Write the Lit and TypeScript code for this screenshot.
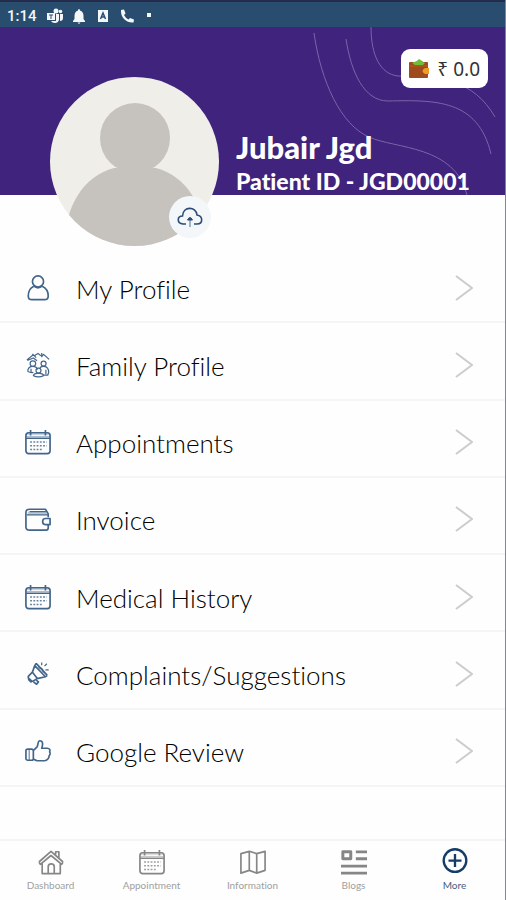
import { LitElement, html, css, svg, TemplateResult } from "lit";
import { customElement } from "lit/decorators.js";
import { classMap } from "lit/directives/class-map.js";

const calendar = svg`
  <rect x="1" y="4" width="26" height="22.500" rx="3"/>
  <path d="M1 10H27M6 1V7M22 1V7" />
  <path d="M1.500 5.500H26.500M1.500 8H26.500" stroke-width="1" opacity=".5"/>
  <path d="M5.500 14H23.500M5.500 18H23.500M5.500 22H19" stroke-dasharray="2 1.500" stroke-width="1.600" opacity=".8"/>`;

const icons: Record<string, TemplateResult> = {
  person: svg`
    <circle cx="14" cy="7" r="6"/>
    <path d="M9.500 12C5 14 3.500 18.500 3.500 22.500C3.500 25 5 26.500 7.500 26.500H21C23.500 26.500 25 25 25 22.500C25 18.500 23 14 18.500 12"/>
    <path d="M9.500 12Q14 15.500 18.500 12"/>`,
  family: svg`
    <g stroke-width="1.300">
      <path d="M2 8.500L9 3M2.500 9L9 6.500L13 9.500M10 4L14 1.500L17 4M18 1V5L20 2.500L26 8M8 2L12 6"/>
      <circle cx="8.500" cy="12.500" r="3"/><circle cx="20" cy="12.500" r="2.700"/>
      <path d="M3 21C3 16.500 5 15.500 8.500 15.500S13 17 13.500 19M3 21Q6 22.500 9 22"/>
      <path d="M16 17.500Q17 15 20.500 15.500Q25.500 16 25.500 22L24.500 25H19.500"/>
      <circle cx="14.500" cy="20" r="2.700"/>
      <path d="M9 25.500Q9.500 22.500 14.500 23Q19.500 22.500 20 25.500Q14.500 28 9 25.500Z"/>
      <path d="M22.500 19V24M6.500 18V22"/>
    </g>`,
  calendar,
  wallet: svg`
    <path d="M25 12V8.500L22 3.500H5C2.500 3.500 1 4.500 1 7V22.500C1 24.500 2.500 26 5 26H23C24.500 26 25 25 25 23.500V20"/>
    <path d="M2 9.500H25M5 6H22.500" stroke-width="1.200"/>
    <path d="M3 7.500H23.500" opacity=".35" stroke-width="3"/>
    <path d="M27 13.500H22C18 13.500 18 20 22 20H27Z"/>`,
  megaphone: svg`
    <path d="M12 2.500L24 15.500M10.500 5L22 17M12 2.500L10.500 5L8 12L4 16C2.500 18 5.500 23 9 21.500L13 19L22 17L24 15.500"/>
    <path d="M8 12L13.500 19M4.500 19L8 22.500M3.500 19.500L7 23M12 20.500L14.500 22.500L12.500 25L9 22.500"/>
    <path d="M14.500 7.500Q20 7 19.500 12.500M18 1.500V4.500M21 5.500L23.500 3M22 9.500H25.500" stroke-width="1.300"/>`,
  thumb: svg`
    <path d="M9.500 13L13 9.500C14.500 7 13.500 3 16 3C19.500 3 19.500 7 18 11H24C26.500 11 27.500 13 26.500 15C27.500 16 27 18.500 26 19C26 21.500 24 24.500 21 24.500H13L9.500 23"/>
    <rect x="1" y="12" width="8" height="12" rx="2"/><path d="M4.500 12V24" stroke-width="1"/>`,
  home: svg`
    <path d="M1 14L14 2.500L27 14M1 14L2.500 16.500L14 7L25.500 16.500L27 14M4.500 15.500V26.500H24V15.500M19 6V3H22.500V10M11 26.500V19C11 15 17.500 15 17.500 19V26.500"/>`,
  map: svg`
    <path d="M1 5L10 2.500L18 5L27 2.500V23L18 26L10 23L1 26ZM10 2.500V23M18 5V26"/>`,
  blogs: svg`
    <path d="M2 3H10.500V10.500H2Z" stroke-width="3.200"/>
    <path d="M16 3H28M16 10.500H28M0 18.500H28M0 26H28" stroke-width="3"/>`,
  more: svg`<circle cx="14" cy="12.500" r="12.200" stroke-width="2.500"/><path d="M14 5.500V19.500M7 12.500H21" stroke-width="2.500"/>`,
};

const icon = (name: string) => html`<svg class="icon" viewBox="0 0 28 28" aria-hidden="true">${icons[name]}</svg>`;

const menu = [
  ["person", "My Profile"],
  ["family", "Family Profile"],
  ["calendar", "Appointments"],
  ["wallet", "Invoice"],
  ["calendar", "Medical History"],
  ["megaphone", "Complaints/Suggestions"],
  ["thumb", "Google Review"],
];

const tabs = [
  ["home", "Dashboard"],
  ["calendar", "Appointment"],
  ["map", "Information"],
  ["blogs", "Blogs"],
  ["more", "More"],
];

@customElement("app-root")
export class AppRoot extends LitElement {
  static styles = css`
    :host {
      display: flex;
      flex-direction: column;
      box-sizing: border-box;
      min-height: 100vh;
      background: #fefefe;
      border-right: 1px solid #85858f;
      font-family: Lato, "Noto Sans", sans-serif;
      font-variant-ligatures: none;
      color: #1c1c1c;
    }
    * { box-sizing: border-box; }
    a { color: inherit; text-decoration: none; }
    .status {
      display: flex;
      align-items: center;
      gap: 8px;
      height: 27px;
      padding: 2px 7px 0;
      border-top: 2px solid #252b4b;
      background: #294d6f;
      color: #f4f7fa;
      font: 500 15px/24px Roboto, sans-serif;
    }
    .time { padding-right: 2px; }
    .glyph { width: 16px; height: 16px; fill: #f4f7fa; overflow: visible; }
    .hero {
      position: relative;
      display: grid;
      grid-template-columns: 169px 1fr;
      grid-template-rows: auto 1fr;
      column-gap: 17px;
      padding: 22px 17px 0 50px;
      background: #3f237d;
      color: #fff;
    }
    .waves {
      position: absolute;
      top: 0;
      right: 0;
      width: 200px;
      height: 168px;
      fill: none;
      stroke: #7b64a8;
      stroke-width: 1;
    }
    .avatar {
      position: relative;
      grid-row: 1 / 3;
      height: 169px;
      margin: 28px 0 -51px;
    }
    .portrait { display: block; width: 100%; height: 100%; }
    .upload {
      position: absolute;
      right: 8px;
      bottom: 8px;
      display: grid;
      place-items: center;
      width: 42px;
      height: 42px;
      padding: 0;
      border: 0;
      border-radius: 50%;
      background: #f4f7fa;
    }
    .cloud { width: 28px; height: 28px; fill: none; stroke: #2c4c75; stroke-width: 1.600; }
    .balance {
      position: relative;
      justify-self: end;
      display: flex;
      align-items: center;
      gap: 8px;
      height: 39px;
      padding: 0 8px;
      border: 0;
      border-radius: 9px;
      background: #fff;
      color: #333;
      font: 400 19px/24px "Noto Sans", sans-serif;
    }
    .purse { width: 20px; height: 20px; }
    .who { position: relative; align-self: end; }
    .name { margin: 0; font-size: 31px; line-height: 40px; font-weight: 900; }
    .pid { margin: 0; font-size: 23px; line-height: 28px; font-weight: 900; white-space: nowrap; }
    main { flex: 1; display: flex; padding: 51px 0 52px; }
    .menu {
      flex: 1;
      display: grid;
      grid-auto-rows: 1fr;
      margin: 0;
      padding: 0;
      list-style: none;
    }
    .item { display: flex; border-bottom: 2px solid #f5f5f6; }
    .link {
      flex: 1;
      display: flex;
      align-items: center;
      gap: 25px;
      min-height: 72px;
      padding: 16px 32px 8px 25px;
      font-size: 26px;
      line-height: 32px;
      font-weight: 300;
      color: #000;
    }
    .label { flex: 1; padding-top: 2px; }
    .icon {
      flex: none;
      width: 26px;
      height: 26px;
      fill: none;
      stroke: #42658b;
      stroke-width: 1.800;
      stroke-linejoin: round;
    }
    .chevron { width: 18px; height: 26px; fill: none; stroke: #ccc; stroke-width: 2; }
    .tabs {
      display: grid;
      grid-template-columns: repeat(5, 1fr);
      height: 61px;
      border-top: 2px solid #f4f4f5;
    }
    .tab {
      display: flex;
      flex-direction: column;
      align-items: center;
      gap: 3px;
      padding-top: 8px;
      color: #a0a0a0;
      font-size: 10px;
      line-height: 14px;
    }
    .tab .icon { stroke: #868686; }
    .tab.active { color: #466080; }
    .tab.active .icon { stroke: #153b68; overflow: visible; }
  `;

  render() {
    return html`
      <div class="status">
        <span class="time">1:14</span>
        <svg class="glyph" viewBox="0 0 16 16"><circle cx="9" cy="3" r="2.500"/><circle cx="13.500" cy="3.500" r="1.800"/><path d="M0 5H8V12H0ZM9 6H12V12Q11 15 8 15Q5 15 4 13H9ZM13 6H16V10Q16 13 13 13Z"/><path d="M2 7H6M4 7V11" stroke="#294d6f"/></svg>
        <svg class="glyph" viewBox="0 0 16 16"><path d="M8 1Q9 1 9 2.500Q12.500 3.500 12.500 8V11L14 13V14H2V13L3.500 11V8Q3.500 3.500 7 2.500Q7 1 8 1ZM6.500 14.500H9.500Q8 17 6.500 14.500Z"/></svg>
        <svg class="glyph" viewBox="0 0 16 16"><path d="M3 2H13V14H3Z"/><path d="M5.500 11L8 5L10.500 11M6 9H10" fill="none" stroke="#294d6f" stroke-width="1.500"/></svg>
        <svg class="glyph" viewBox="0 0 16 16"><path d="M2 2L5 1.500L6.500 5.500L5 7Q6.500 10 9.500 11.500L11 10L15 11.500L14.500 14.500Q9 15 5 11Q1.500 7 2 2Z"/></svg>
        <svg class="glyph" viewBox="0 0 16 16"><rect x="4" y="5" width="4" height="4"/></svg>
      </div>
      <header class="hero">
        <svg class="waves" viewBox="0 0 200 168" aria-hidden="true">
          <path d="M9 6C16 55 36 98 64 110C90 122 150 118 162 168"/>
          <path d="M41 12C46 45 59 74 83 74C130 73 173 72 186 127"/>
          <path d="M66 0C66 28 75 47 93 49C136 50 168 52 190 90"/>
        </svg>
        <div class="avatar">
          <svg class="portrait" viewBox="0 0 169 169" role="img" aria-label="Profile photo">
            <clipPath id="round"><circle cx="84.500" cy="84.500" r="84.500"/></clipPath>
            <g clip-path="url(#round)">
              <rect width="169" height="169" fill="#f0eee9"/>
              <circle cx="85" cy="61" r="35" fill="#c6c3be"/>
              <path d="M64 91H106C128 97 144 114 151 138V169H19V138C26 114 42 97 64 91Z" fill="#c6c3be"/>
            </g>
          </svg>
          <button class="upload" aria-label="Upload photo">
            <svg class="cloud" viewBox="0 0 28 28"><path d="M10 21H7C0.500 20.500 1 13 6.500 13C7 3 20 3 21 12C27 13 27.500 20.500 21 21H18"/><path d="M11.500 17Q14 12 16.500 17Z" fill="#2c4c75" stroke-width="1"/><path d="M14 17V24" opacity=".5"/></svg>
          </button>
        </div>
        <button class="balance">
          <svg class="purse" viewBox="0 0 20 20" aria-hidden="true"><path d="M2 4L7 3L10 0L16 4V7H2Z" fill="#69b83a"/><rect y="3" width="19" height="16" rx="1" fill="#9e4b1d"/><path d="M3 4L10 1L16 4L14 6H6Z" fill="#72bd38"/><path d="M0 7H19" stroke="#b85c22"/><path d="M20 9H16Q11 12 16 15H20Z" fill="#f19a26"/></svg>
          <span>₹ 0.0</span>
        </button>
        <div class="who">
          <h1 class="name">Jubair Jgd</h1>
          <p class="pid">Patient ID - JGD00001</p>
        </div>
      </header>
      <main>
        <ul class="menu">
          ${menu.map(([name, label]) => html`
            <li class="item">
              <a class="link" href="#">
                ${icon(name)}<span class="label">${label}</span>
                <svg class="chevron" viewBox="0 0 18 26" aria-hidden="true"><path d="M1 1L17 13L1 25"/></svg>
              </a>
            </li>`)}
        </ul>
      </main>
      <nav class="tabs">
        ${tabs.map(([name, label]) => html`
          <a class=${classMap({ tab: true, active: name === "more" })} href="#">${icon(name)}<span>${label}</span></a>`)}
      </nav>
    `;
  }
}
